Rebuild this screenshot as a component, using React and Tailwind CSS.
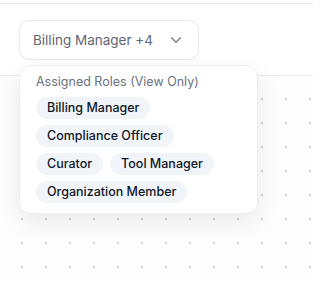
import { ChevronDown } from 'lucide-react';

const roles = ['Billing Manager', 'Compliance Officer', 'Curator', 'Tool Manager', 'Organization Member'];

export default function App() {
  return (
    <div className="relative h-[281px] w-[313px] overflow-hidden bg-white font-['Inter',sans-serif]">
      {/* barra superior */}
      <div className="h-[3px]" />
      <div className="h-[72px] border-t border-[#e5e7eb] px-[19px] pt-[16px]">
        <button className="flex h-[40px] w-[180px] items-center justify-between rounded-[10px] border border-[#e5e7eb] bg-white pl-[13px] pr-[13px] text-[13.5px] text-[#5f6672]">
          <span>Billing Manager +4</span>
          <ChevronDown className="h-[18px] w-[18px] text-[#6b7280]" strokeWidth={1.5} />
        </button>
      </div>

      {/* canvas pontilhado */}
      <div className="h-[206px] border-t border-[#ececec] bg-[#fdfdfd] bg-[radial-gradient(circle,#d4d4d4_1px,transparent_1.2px)] bg-[size:24px_24px] bg-[position:10px_11px]" />

      {/* popover de papéis */}
      <div className="absolute left-[19px] top-[65px] w-[239px] rounded-[12px] border border-[#eeeeee] bg-white px-4 pb-[10px] pt-[7px] shadow-[0_8px_24px_rgba(0,0,0,0.08)]">
        <p className="text-[12.5px] leading-[18px] text-[#6b7280]">Assigned Roles (View Only)</p>
        <div className="mt-[6px] flex flex-wrap gap-x-[7px] gap-y-[6px]">
          {roles.map((role) => (
            <span
              key={role}
              className="rounded-full bg-[#f1f5f9] px-[11px] text-[12.5px] font-medium leading-[22px] text-[#111827]"
            >
              {role}
            </span>
          ))}
        </div>
      </div>
    </div>
  );
}
